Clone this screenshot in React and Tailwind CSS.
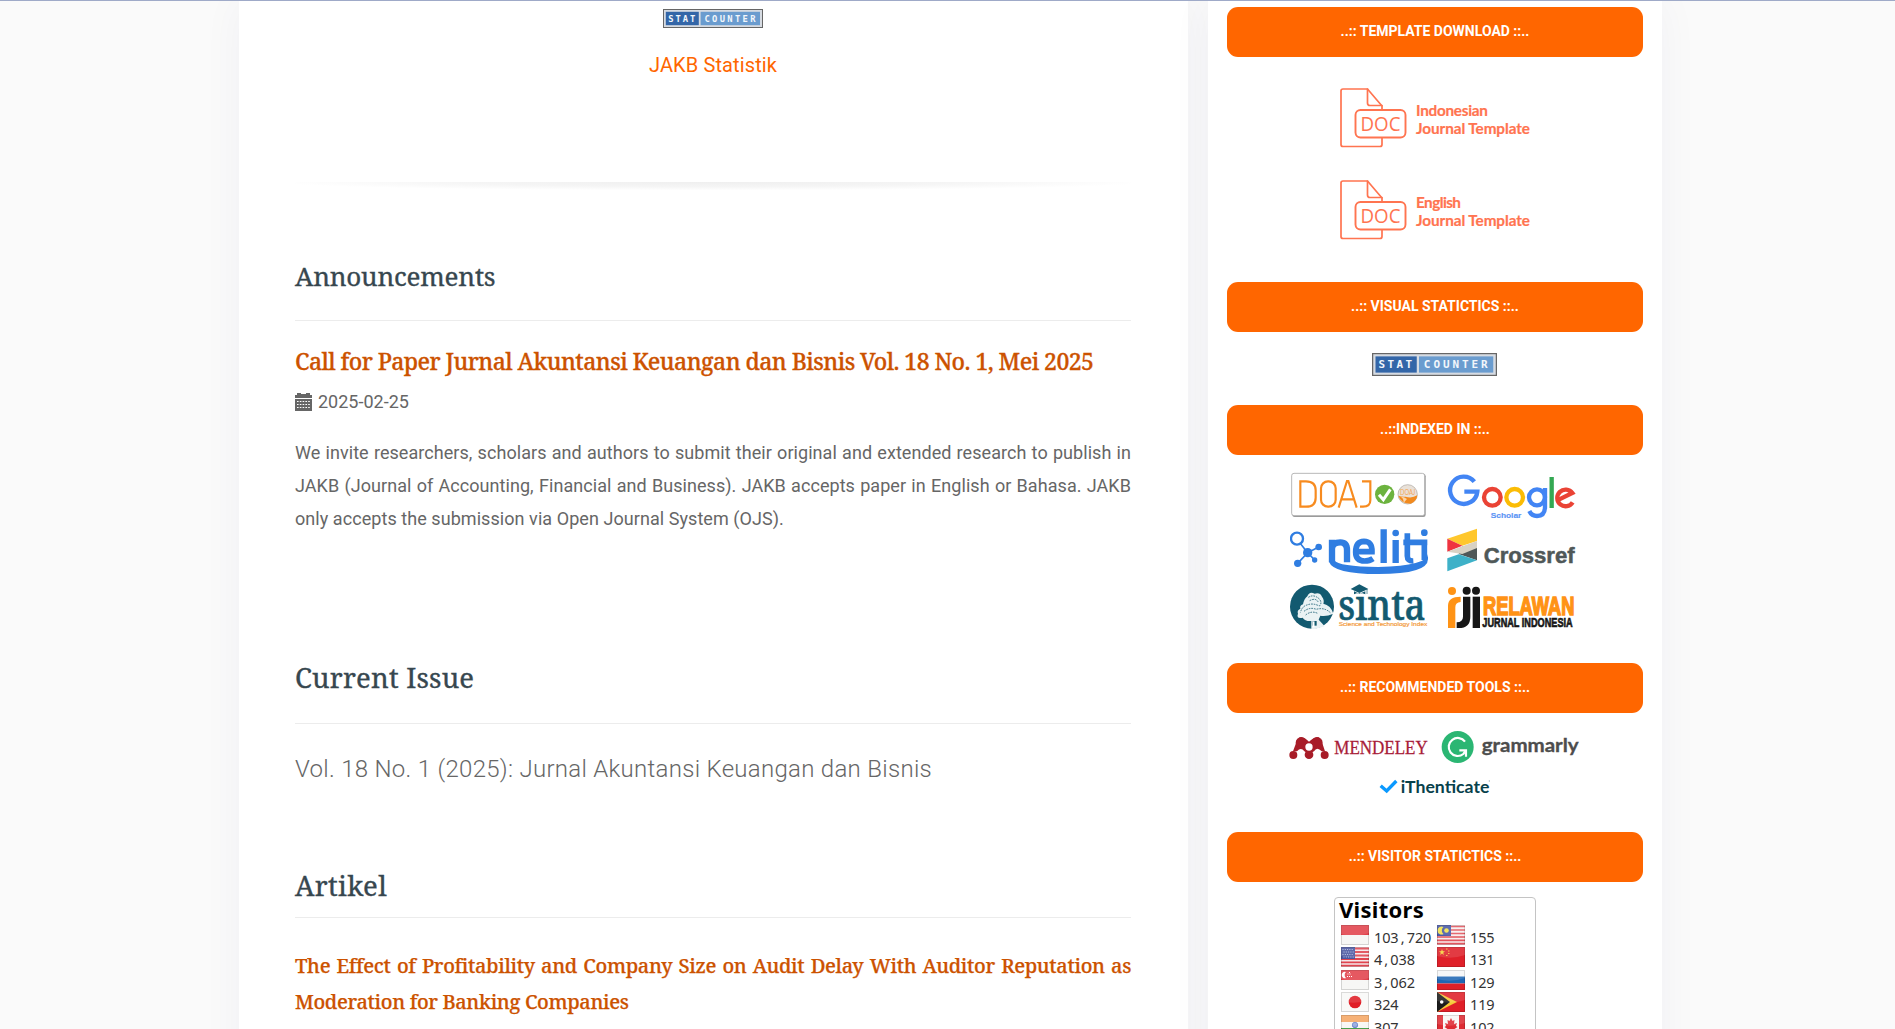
import React from "react";

const SANS = "font-['Roboto',sans-serif]";

function StatCounter({ className }) {
  return (
    <svg viewBox="0 0 100 19" preserveAspectRatio="none" className={className}>
      <rect x="0.5" y="0.5" width="99" height="18" fill="#d6dbe2" stroke="#666" />
      <rect x="2.8" y="2.8" width="33" height="13.4" fill="#3366a8" />
      <rect x="37.6" y="2.8" width="59.4" height="13.4" fill="#6a9ccf" />
      <g fill="#f2f6fb" fontFamily="'DejaVu Sans Mono', monospace" fontWeight="700" fontSize="8.8">
        <text x="5.2" y="12.7" textLength="27" lengthAdjust="spacing">STAT</text>
        <text x="41.5" y="12.7" textLength="51" lengthAdjust="spacing">COUNTER</text>
      </g>
    </svg>
  );
}

function SideTitle({ children }) {
  return (
    <div className="flex h-[50px] items-center justify-center rounded-[11px] bg-[#ff6600] pb-[3px] text-sm font-bold text-white">
      {children}
    </div>
  );
}

function DocTemplate({ language }) {
  return (
    <svg viewBox="0 0 190 60" className="block h-[60px] w-[190px]">
      <g fill="none" stroke="#ff7450" strokeWidth="1.7" strokeLinejoin="round" strokeLinecap="round">
        <path d="M42 21V18L27.500 1H3Q1 1 1 3V56.500Q1 58.500 3 58.500H40Q42 58.500 42 56.500V50" />
        <path d="M27.500 1V15Q27.500 17.500 30 17.500H42" />
        <rect x="15.500" y="22" width="50" height="27.500" rx="5" strokeWidth="1.9" />
      </g>
      <g fill="#ff7450" fontFamily="'Open Sans', sans-serif">
        <text x="20.500" y="42.700" fontSize="19.500" textLength="40" lengthAdjust="spacingAndGlyphs">DOC</text>
        <g fontFamily="Lato, sans-serif" fontWeight="700" fontSize="15.300" stroke="#ff7450" strokeWidth="0.200">
          <text x="76" y="27.700" textLength={language === "English" ? 45 : 72}>{language}</text>
          <text x="76" y="46.200" textLength="114">Journal Template</text>
        </g>
      </g>
    </svg>
  );
}

function Doaj() {
  return (
    <svg viewBox="60 36 414 144" className="block h-12 w-[138px]">
      <rect x="67" y="45" width="400" height="129" rx="7" fill="#999" />
      <rect x="65" y="43" width="399" height="127" rx="7" fill="#fff" stroke="#aaa" strokeWidth="2.500" />
      <g fill="none" stroke="#f78b1f" strokeWidth="6.500">
        <path d="M91 67V143H108Q137 143 137 116V94Q137 67 108 67Z" />
        <rect x="153" y="67" width="44" height="76" rx="21" />
        <path d="M206 146L231 66H235L260 146M213 121H253" />
        <path d="M276 67H301V124Q301 143 279 143H270" />
      </g>
      <circle cx="344" cy="106" r="29" fill="#6cb33f" />
      <path d="M327 107L340 122L361 91" fill="none" stroke="#fff" strokeWidth="9" />
      <circle cx="413" cy="106" r="29" fill="#e9e1d8" stroke="#a9a39c" strokeWidth="2" />
      <path d="M385 110Q393 134 422 134Q440 128 442 109Q425 119 407 113Q394 114 385 110Z" fill="#f28a1e" />
      <path d="M391 113Q401 116 401 131L411 120Q402 113 391 113Z" fill="#fbd5a7" />
      <text x="390" y="108" fontFamily="Lato, sans-serif" fontSize="20" fill="#f3a85a" textLength="46" lengthAdjust="spacingAndGlyphs">DOAJ</text>
    </svg>
  );
}

function GoogleScholar() {
  return (
    <svg viewBox="528 36 402 144" className="block h-12 w-[134px]">
      <g fill="none" strokeWidth="13">
        <path d="M613 68A41 41 0 1 0 622 98H583" stroke="#4285f4" />
        <circle cx="667" cy="115" r="25" stroke="#ea4335" />
        <circle cx="734" cy="115" r="25" stroke="#fbbc05" />
        <circle cx="801" cy="115" r="24" stroke="#4285f4" />
        <path d="M825 87V143Q825 171 801 171Q785 171 778 156" stroke="#4285f4" />
        <path d="M845 54V147" stroke="#34a853" />
        <path d="M908 130A25 25 0 1 1 907 102L862 124" stroke="#ea4335" />
      </g>
      <text x="662" y="176" fontFamily="'Liberation Sans', sans-serif" fontWeight="700" fontSize="24" fill="#5b94f5" stroke="#5b94f5" strokeWidth="0.500" textLength="92" lengthAdjust="spacingAndGlyphs">Scholar</text>
    </svg>
  );
}

function Neliti() {
  return (
    <svg viewBox="60 204 414 144" className="block h-12 w-[138px]">
      <g fill="#2f7de1" stroke="#2f7de1">
        <path d="M88 250L113 281L146 264M83 313L113 281L134 303" fill="none" strokeWidth="5" />
        <circle cx="81" cy="239" r="18" fill="#fff" strokeWidth="7" />
        <circle cx="113" cy="281" r="14" stroke="none" />
        <circle cx="146" cy="264" r="10" stroke="none" />
        <circle cx="134" cy="303" r="8" stroke="none" />
        <circle cx="83" cy="313" r="11" stroke="none" />
        <path d="M177 308Q190 345 325 345Q474 345 474 300V285Q474 320 325 324Q205 323 193 304Z" stroke="none" />
        <g fill="none" strokeWidth="19">
          <path d="M186 310V242M186 268Q188 250 211 250Q231 250 231 273V310" />
          <path d="M262 278H306Q307 247 282 247Q257 248 257 279Q257 306 284 306Q299 306 309 299" strokeWidth="17" />
          <path d="M341 211V312M377 243V312" />
          <path d="M412 223V291Q412 307 430 306M400 250H472M463 243V303" strokeWidth="17" />
        </g>
        <circle cx="377" cy="222" r="10" stroke="none" />
        <circle cx="463" cy="221" r="10" stroke="none" />
      </g>
    </svg>
  );
}

function Crossref() {
  return (
    <svg viewBox="528 204 402 144" className="block h-12 w-[134px]">
      <path d="M532 239L621 209V246L577 260Z" fill="#ffc72c" />
      <path d="M532 239L577 260L532 278Z" fill="#ef3340" />
      <path d="M577 262L621 266V304L566 285Z" fill="#4f5858" />
      <path d="M532 278L577 262L621 246V267L577 285Z" fill="#d8d2c4" />
      <path d="M532 298L566 286L621 304L532 337Z" fill="#3eb1c8" />
      <text x="641" y="311" fontFamily="'Liberation Sans', sans-serif" fontWeight="700" fontSize="66" fill="#4f5858" stroke="#4f5858" strokeWidth="1.500" textLength="273" lengthAdjust="spacingAndGlyphs">Crossref</text>
    </svg>
  );
}

function Sinta() {
  return (
    <svg viewBox="60 372 414 144" className="block h-12 w-[138px]">
      <circle cx="126" cy="443" r="66" fill="#135a70" />
      <path d="M112 412Q118 396 134 404Q150 399 156 413Q164 424 160 434Q182 438 190 464Q168 474 151 470L146 482Q154 490 164 502L136 510H124V486Q106 488 98 476Q78 480 84 464Q80 454 91 449Q88 440 99 436Q102 420 112 412Z" fill="#eaf2f4" />
      <g fill="none" stroke="#135a70" strokeWidth="2.500" strokeDasharray="5 3">
        <path d="M115 415Q132 404 149 421Q157 432 148 441Q128 431 111 438Q96 442 91 461" />
        <path d="M119 425Q138 415 145 430M102 457Q119 443 139 451Q163 444 181 461M107 468Q124 454 143 463" />
      </g>
      <path d="M128 486H140V500H128Z" fill="#135a70" />
      <path d="M131 487V505" stroke="#fff" strokeWidth="5" />
      <text x="205" y="483" fontFamily="'Noto Serif', 'DejaVu Serif', serif" fontSize="128" fontWeight="500" fill="#135a70" stroke="#135a70" strokeWidth="2" textLength="262" lengthAdjust="spacingAndGlyphs">sınta</text>
      <path d="M242 390L268 376L295 390L268 402Z" fill="#135a70" />
      <path d="M252 397L268 404L286 397V406Q268 398 252 406Z" fill="#135a70" />
      <path d="M291 390V405" stroke="#135a70" strokeWidth="2" />
      <text x="206" y="500" fontFamily="'Liberation Sans', sans-serif" fontSize="15.500" fill="#f39a3a" stroke="#f39a3a" strokeWidth="0.500" textLength="266" lengthAdjust="spacingAndGlyphs">Science and Technology Index</text>
    </svg>
  );
}

function Relawan() {
  return (
    <svg viewBox="528 372 402 144" className="block h-12 w-[134px]">
      <circle cx="546" cy="396" r="12" fill="#ff9315" />
      <path d="M534 507V440Q534 413 572 413V429Q556 430 556 445V507Z" fill="#ff9315" />
      <g fill="#161616">
        <circle cx="590" cy="395" r="12" />
        <circle cx="618" cy="395" r="12" />
        <path d="M579 413H601V473Q601 507 566 507H560V490Q579 489 579 473Z" />
        <path d="M608 413H630V507H608Z" />
      </g>
      <text x="639" y="468" fontFamily="'Liberation Sans', sans-serif" fontWeight="700" fontSize="80" fill="#ff9315" stroke="#ff9315" strokeWidth="5" textLength="274" lengthAdjust="spacingAndGlyphs">RELAWAN</text>
      <text x="637" y="504" fontFamily="'Liberation Sans', sans-serif" fontWeight="700" fontSize="40" fill="#161616" stroke="#161616" strokeWidth="2" textLength="271" lengthAdjust="spacingAndGlyphs">JURNAL INDONESIA</text>
    </svg>
  );
}

function Mendeley() {
  return (
    <svg viewBox="268 240 417 102" className="block h-[34px] w-[139px]">
      <g fill="#a81c28">
        <circle cx="305" cy="278" r="17" />
        <circle cx="352" cy="278" r="17" />
        <path d="M300 262Q315 262 328 275Q342 262 357 262L369 283L376 304H366Q352 289 343 304L328 312L314 304Q304 290 292 304H280L289 280Z" />
        <circle cx="281" cy="315" r="12" />
        <circle cx="328" cy="314" r="13" />
        <circle cx="375" cy="315" r="12" />
      </g>
      <circle cx="328" cy="291" r="11" fill="#fff" />
      <text x="404" y="312" fontFamily="'Liberation Serif', serif" fontSize="54" fill="#a81c38" stroke="#a81c38" strokeWidth="0.800" textLength="280" lengthAdjust="spacingAndGlyphs">MENDELEY</text>
    </svg>
  );
}

function Grammarly() {
  return (
    <svg viewBox="724 240 420 102" className="block h-[34px] w-[140px]">
      <circle cx="774" cy="291" r="48" fill="#2bb673" />
      <path d="M796 275A27 27 0 1 0 791 312L799 301M779 301H799V320" fill="none" stroke="#fff" strokeWidth="6.500" />
      <text x="846" y="307" fontFamily="Lato, sans-serif" fontWeight="700" fontSize="58" fill="#4d4d4d" stroke="#4d4d4d" strokeWidth="1" textLength="291" lengthAdjust="spacingAndGlyphs">grammarly</text>
    </svg>
  );
}

function IThenticate() {
  return (
    <svg viewBox="537 384 336 51" className="block h-[17px] w-28">
      <path d="M542 407L560 423L589 393" fill="none" stroke="#0a99ff" strokeWidth="10" />
      <text x="602" y="428" fontFamily="Lato, sans-serif" fontWeight="700" fontSize="53" fill="#07414b" textLength="266" lengthAdjust="spacingAndGlyphs">iThenticate</text>
      <circle cx="868" cy="393" r="2" fill="#9bb3b8" />
    </svg>
  );
}

const FLAGS = {
  id: (
    <>
      <path d="M0 0H28V10H0Z" fill="#e2434c" />
      <path d="M0 10H28V20H0Z" fill="#f7f7f5" />
    </>
  ),
  us: (
    <>
      <path d="M0 0H28V20H0Z" fill="#f5e9ea" />
      <path d="M0 1.500H28M0 5H28M0 8.500H28M0 12H28M0 15.300H28M0 18.700H28" stroke="#e0454f" strokeWidth="1.800" />
      <path d="M0 0H14V12H0Z" fill="#4956a0" />
      <path d="M1.500 2.500H13M2.500 5H13M1.500 7.500H13M2.500 10H13" stroke="#b9c0e2" strokeWidth="1" strokeDasharray="1 1.300" />
    </>
  ),
  sg: (
    <>
      <path d="M0 0H28V10H0Z" fill="#e2434c" />
      <path d="M0 10H28V20H0Z" fill="#f7f7f5" />
      <path d="M5 2A3.200 3.200 0 1 0 5 8A4 4 0 0 1 5 2Z" fill="#fff" />
      <path d="M6.500 4H10M6 6.500H11M8 2.500H9" stroke="#fff" strokeWidth="1" strokeDasharray="1 1" />
    </>
  ),
  jp: (
    <>
      <path d="M0 0H28V20H0Z" fill="#f9f9f7" />
      <circle cx="14" cy="10" r="6.300" fill="#e01e26" />
    </>
  ),
  in: (
    <>
      <path d="M0 0H28V7H0Z" fill="#f5a763" />
      <path d="M0 7H28V13H0Z" fill="#f7f7f5" />
      <path d="M0 13H28V20H0Z" fill="#4aa04c" />
      <circle cx="14" cy="10" r="2.700" fill="#93a7de" stroke="#6d86cf" />
    </>
  ),
  my: (
    <>
      <path d="M0 0H28V20H0Z" fill="#f7eeee" />
      <path d="M0 1.500H28M0 5H28M0 8.500H28M0 12H28M0 15.300H28M0 18.700H28" stroke="#e2555e" strokeWidth="1.700" />
      <path d="M0 0H14V11H0Z" fill="#4758a5" />
      <path d="M6.500 2A4 4 0 1 0 6.500 9A4.500 4.500 0 0 1 6.500 2Z" fill="#f2e14c" />
      <circle cx="9.500" cy="5.500" r="2.300" fill="#f2e14c" />
    </>
  ),
  cn: (
    <>
      <path d="M0 0H28V20H0Z" fill="#df2029" />
      <path d="M5 2L5.800 4.300H8L6.200 5.700L6.900 8L5 6.600L3.100 8L3.800 5.700L2 4.300H4.200Z" fill="#f6d33c" />
      <path d="M9 2H10.500M11 4H12.500M11 6.500H12.500M9 8.500H10.500" stroke="#f6b33c" strokeWidth="1.200" />
    </>
  ),
  ru: (
    <>
      <path d="M0 0H28V6.500H0Z" fill="#f5f6f7" />
      <path d="M0 6.500H28V13.500H0Z" fill="#1f67b4" />
      <path d="M0 13.500H28V20H0Z" fill="#de2029" />
    </>
  ),
  tl: (
    <>
      <path d="M0 0H28V20H0Z" fill="#e01f28" />
      <path d="M0 0L20 10L0 20Z" fill="#f6c935" />
      <path d="M0 0L13 10L0 20Z" fill="#1c1c1c" />
      <circle cx="4.700" cy="10" r="1.800" fill="#fff" />
    </>
  ),
  ca: (
    <>
      <path d="M0 0H28V20H0Z" fill="#f7f7f5" />
      <path d="M0 0H6V20H0ZM22 0H28V20H22Z" fill="#de2b33" />
      <path d="M14 3L15.500 6L17.500 5L17 9L20 8L19 11L20.500 12L16 15H14.500V18H13.500V15H12L7.500 12L9 11L8 8L11 9L10.500 5L12.500 6Z" fill="#de2b33" />
    </>
  ),
};

const VISITORS = [
  ["id", "103,720"],
  ["my", "155"],
  ["us", "4,038"],
  ["cn", "131"],
  ["sg", "3,062"],
  ["ru", "129"],
  ["jp", "324"],
  ["tl", "119"],
  ["in", "307"],
  ["ca", "102"],
];

function VisitorCell({ code, count }) {
  return (
    <div className="flex h-[22.400px] items-start">
      <svg viewBox="0 0 28 20" className="block h-5 w-7">
        {FLAGS[code]}
        <path d="M0.500 0.500H27.500V19.500H0.500Z" fill="none" stroke="#000" strokeOpacity="0.140" />
        <path d="M0 0H28V8Q14 13 0 9Z" fill="#fff" fillOpacity="0.120" />
      </svg>
      <span className="ml-[5px] mt-[2px] inline-flex font-['Noto_Sans',sans-serif] text-[14.500px] leading-5 text-[#333]">
        {count.split("").map((ch, i) => (
          <span key={i} className="flex w-[8.200px] justify-center">{ch}</span>
        ))}
      </span>
    </div>
  );
}

function Sidebar() {
  return (
    <aside className="h-[1100px] w-[454px] bg-white px-[19px] pt-[6px] shadow-[0_0_40px_rgba(40,40,120,0.045)]">
      <SideTitle>..:: TEMPLATE DOWNLOAD ::..</SideTitle>
      <div className="flex h-[225px] flex-col items-center gap-8 pt-[31px]">
        <DocTemplate language="Indonesian" />
        <DocTemplate language="English" />
      </div>
      <SideTitle>..:: VISUAL STATICTICS ::..</SideTitle>
      <div className="flex h-[73px] justify-center pr-px pt-[21px]">
        <StatCounter className="block h-[23px] w-[125px]" />
      </div>
      <SideTitle>..::INDEXED IN ::..</SideTitle>
      <div className="flex h-[208px] justify-center pt-[16px]">
        <div className="grid h-fit grid-cols-[138px_134px] gap-x-[18px] gap-y-2">
          <Doaj />
          <GoogleScholar />
          <Neliti />
          <Crossref />
          <Sinta />
          <Relawan />
        </div>
      </div>
      <SideTitle>..:: RECOMMENDED TOOLS ::..</SideTitle>
      <div className="flex h-[119px] flex-col items-center gap-[14px] pt-[17px]">
        <div className="flex gap-[13px]">
          <Mendeley />
          <Grammarly />
        </div>
        <IThenticate />
      </div>
      <SideTitle>..:: VISITOR STATICTICS ::..</SideTitle>
      <div className="mx-auto mt-[15px] h-[200px] w-[202px] rounded-[4px] border border-[#c4c4c4] pl-[6px]">
        <div className="-ml-[2px] -mt-px h-[28px] font-['Noto_Sans',sans-serif] text-[22px] font-bold leading-[25px] tracking-[0.300px] text-black">Visitors</div>
        <div className="grid grid-cols-[96px_auto]">
          {VISITORS.map(([code, count]) => (
            <VisitorCell key={code} code={code} count={count} />
          ))}
        </div>
      </div>
    </aside>
  );
}

function CalendarIcon() {
  return (
    <svg viewBox="0 0 17 18" className="block h-[18px] w-[17px]">
      <path d="M0 2H2V0H6V1H11V0H15V2H17V5H0ZM0 6H17V18H0Z" fill="#666" />
      <path d="M2 8.500H15M2 11.500H15M2 14.500H15" stroke="#fff" strokeWidth="1.200" strokeDasharray="1.600 1.200" />
    </svg>
  );
}

function SectionHeading({ children, className }) {
  return (
    <h2 className={"whitespace-nowrap font-['Noto_Serif','DejaVu_Serif',serif] leading-8 text-[#37474f] [-webkit-text-stroke:0.350px_#37474f] " + className}>
      {children}
    </h2>
  );
}

function MainColumn() {
  return (
    <main className="h-[1100px] w-[949px] bg-white pl-14 pr-[57px] shadow-[0_0_40px_rgba(40,40,120,0.045)]">
      <div className="flex h-[181px] flex-col items-center pt-2">
        <StatCounter className="block h-[19px] w-[100px]" />
        <a className="mt-[21px] text-xl leading-8 tracking-[0.120px] text-[#ff6600]">JAKB Statistik</a>
      </div>
      <div className="h-[10px] bg-[radial-gradient(ellipse_52%_85%_at_50%_0%,#efefef_0%,#f5f5f5_55%,#ffffff_100%)]" />
      <section className="flex flex-col">
        <SectionHeading className="mt-[68px] text-[26px] tracking-[-0.200px]">Announcements</SectionHeading>
        <div className="mt-[28px] border-t border-[#ececec]" />
        <h3 className="mt-[24px] whitespace-nowrap font-['Noto_Serif','DejaVu_Serif',serif] text-[23px] font-medium leading-8 tracking-[-0.570px] text-[#cc5200] [-webkit-text-stroke:0.300px_#cc5200]">
          Call for Paper Jurnal Akuntansi Keuangan dan Bisnis Vol. 18 No. 1, Mei 2025
        </h3>
        <div className="mt-[9px] flex h-8 items-center gap-[6px] text-lg text-[#666]">
          <CalendarIcon />
          <span>2025-02-25</span>
        </div>
        <p className="mt-[18px] text-justify text-lg leading-[33px] tracking-[0.060px] text-[#666]">
          We invite researchers, scholars and authors to submit their original and extended research to publish in JAKB (Journal of Accounting, Financial and Business). JAKB accepts paper in English or Bahasa. JAKB only accepts the submission via Open Journal System (OJS).
        </p>
      </section>
      <section className="mt-[127px]">
        <SectionHeading className="text-[27.500px] tracking-[0.200px]">Current Issue</SectionHeading>
        <div className="mt-[29px] border-t border-[#ececec]" />
        <div className="mt-[29px] whitespace-nowrap text-2xl font-light leading-8 tracking-[0.290px] text-[#666]">
          Vol. 18 No. 1 (2025): Jurnal Akuntansi Keuangan dan Bisnis
        </div>
      </section>
      <section className="mt-[85px]">
        <SectionHeading className="text-[27.500px] tracking-[0.350px]">Artikel</SectionHeading>
        <div className="mt-[15px] border-t border-[#ececec]" />
        <h3 className="mt-[30px] text-justify font-['Noto_Serif','DejaVu_Serif',serif] text-[20px] font-medium leading-9 tracking-[-0.360px] text-[#cc5200] [-webkit-text-stroke:0.250px_#cc5200]">
          The Effect of Profitability and Company Size on Audit Delay With Auditor Reputation as Moderation for Banking Companies
        </h3>
      </section>
    </main>
  );
}

export default function App() {
  return (
    <div className={"h-[1029px] overflow-hidden border-t border-[#9faac8] bg-[#fafafa] " + SANS}>
      <div className="flex gap-5 pl-[239px]">
        <MainColumn />
        <Sidebar />
      </div>
    </div>
  );
}
